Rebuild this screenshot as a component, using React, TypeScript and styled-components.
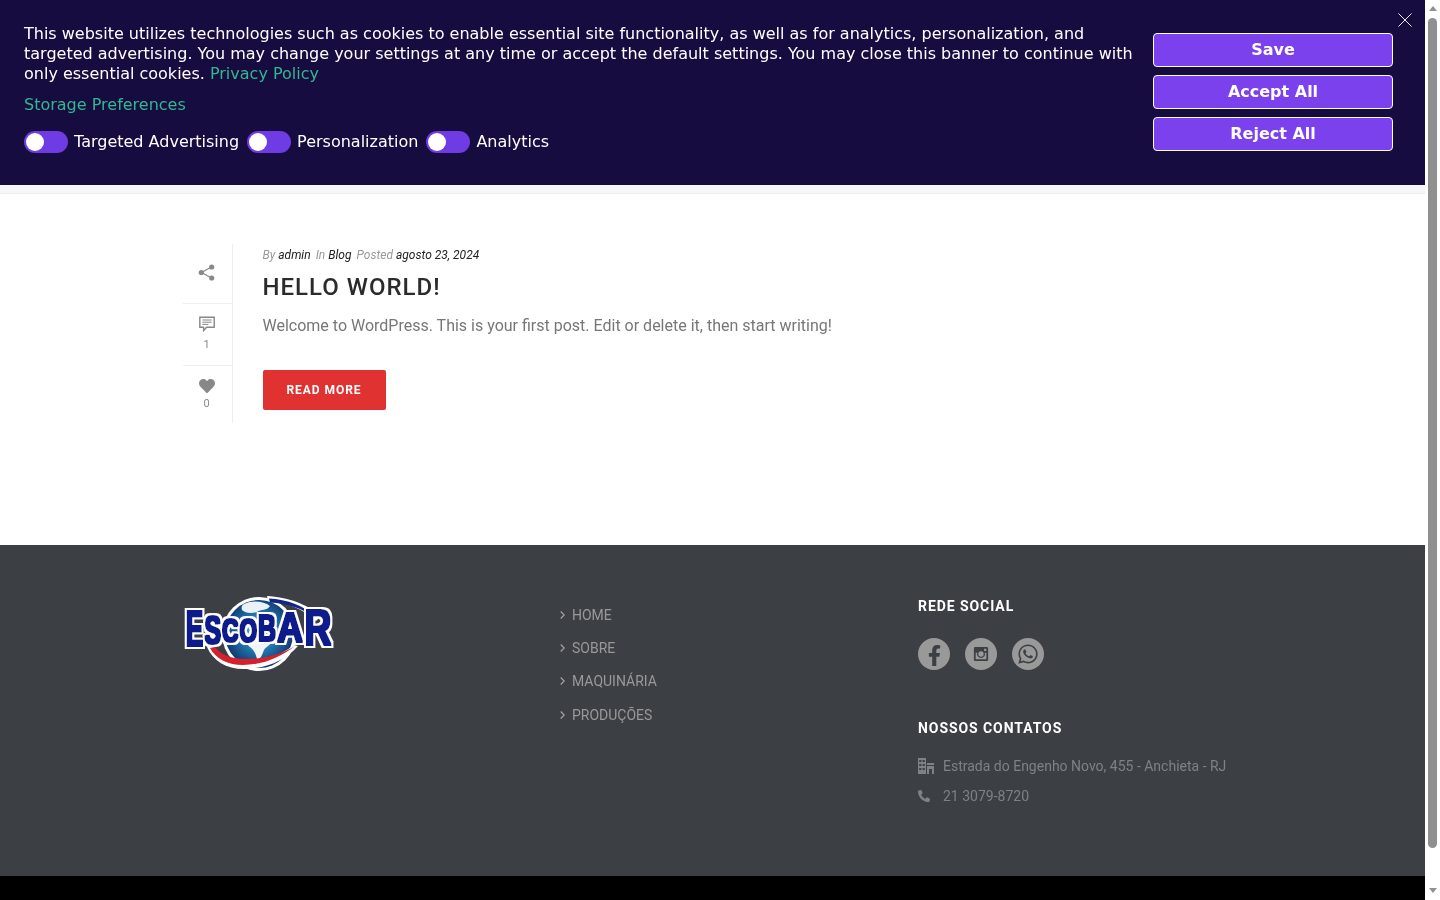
import React from "react";
import styled, { createGlobalStyle } from "styled-components";
import { FaFacebookF, FaHeart, FaPhoneAlt, FaWhatsapp } from "react-icons/fa";

const GlobalStyle = createGlobalStyle`
  html, body { margin: 0; padding: 0; background: #fff; overflow: hidden; }
  body { font-family: Roboto, "Liberation Sans", sans-serif; }
  * { box-sizing: border-box; }
`;

const Shell = styled.div`
  height: 100vh;
  display: flex;
  overflow: hidden;
`;
const Page = styled.div`
  flex: 1;
  min-width: 0;
  position: relative;
  will-change: transform;
`;
const ScrollRail = styled.div`
  width: 15px;
  flex: none;
  height: 100vh;
  background: #fff;
  display: flex;
  flex-direction: column;
  align-items: center;
`;
const ArrowUp = styled.span`
  margin-top: 6px;
  border-left: 4.5px solid transparent;
  border-right: 4.5px solid transparent;
  border-bottom: 5px solid #909090;
`;
const Thumb = styled.span`
  width: 9px;
  height: 830px;
  margin-top: 7px;
  border-radius: 5px;
  background: #8f8f8f;
`;
const ArrowDown = styled.span`
  margin-top: 40px;
  border-left: 4.5px solid transparent;
  border-right: 4.5px solid transparent;
  border-top: 5px solid #909090;
`;
const Banner = styled.section`
  position: absolute;
  top: 0;
  left: 0;
  right: 0;
  height: 185px;
  background: #170c40;
  color: #fff;
  font-family: "DejaVu Sans", sans-serif;
  font-size: 16px;
  line-height: 20px;
  padding: 24px 32px 0 24px;
  display: flex;
  justify-content: space-between;
  z-index: 10;
`;
const BannerText = styled.div`
  width: 1115px;
`;
const Notice = styled.p`
  margin: 0;
`;
const BannerLink = styled.a`
  color: #33b791;
`;
const Prefs = styled.div`
  margin-top: 11px;
  color: #33b791;
`;
const Toggles = styled.div`
  display: flex;
  align-items: center;
  gap: 8px;
  margin-top: 16px;
`;
const Toggle = styled.span`
  width: 44px;
  height: 22px;
  border-radius: 11px;
  background: #6e3be4;
  padding: 2px;
  display: flex;
  &::before {
    content: "";
    width: 18px;
    height: 18px;
    border-radius: 50%;
    background: #fff;
  }
`;
const ToggleItem = styled.label`
  display: flex;
  align-items: center;
  gap: 6px;
`;
const BannerActions = styled.div`
  display: flex;
  flex-direction: column;
  gap: 8px;
  margin-top: 9px;
  width: 240px;
`;
const ActionButton = styled.button`
  height: 34px;
  border: 1px solid #fff;
  border-radius: 4px;
  background: #7a41ec;
  color: #fff;
  font: bold 16px "DejaVu Sans", sans-serif;
  padding: 0 0 2px;
`;
const Close = styled.svg`
  position: absolute;
  top: 13px;
  right: 13px;
  width: 14px;
  height: 14px;
`;

const Header = styled.header`
  height: 194px;
  background: #f6f6f9;
  border-bottom: 1px solid #ececef;
`;
const Main = styled.main`
  height: 351px;
  padding-top: 50px;
`;
const Container = styled.div`
  width: 1059px;
  margin: 0 auto;
`;
const Post = styled.article`
  display: flex;
  gap: 29.5px;
`;
const Rail = styled.aside`
  width: 50px;
  border-right: 1px solid #eeeeee;
  display: flex;
  flex-direction: column;
  color: #888;
`;
const RailItem = styled.div<{ $h: number }>`
  height: ${(p) => p.$h}px;
  display: flex;
  flex-direction: column;
  align-items: center;
  padding-top: ${(p) => (p.$h === 60 ? 20 : 12)}px;
  padding-right: 2px;
  border-bottom: 1px solid #eeeeee;
  font-size: 11px;
  line-height: 14px;
  color: #8a8a8a;
  &:last-child { border-bottom: 0; }
  svg { flex: none; }
`;
const Count = styled.span<{ $gap: number }>`
  margin-top: ${(p) => p.$gap}px;
`;
const PostBody = styled.div`
  flex: 1;
`;
const Meta = styled.div`
  font-size: 12px;
  line-height: 20px;
  font-style: italic;
  color: #999;
  display: flex;
  gap: 5px;
  padding-top: 1px;
  margin-bottom: -1px;
  span { display: inline-flex; gap: 3px; }
  b { font-weight: 400; color: #222; }
`;
const Title = styled.h2`
  margin: 6px 0 0;
  font-size: 24px;
  line-height: 34px;
  font-weight: 500;
  letter-spacing: 1px;
  color: #2b2b2b;
`;
const Excerpt = styled.p`
  margin: 10px 0 0;
  font-size: 16px;
  line-height: 24px;
  color: #777;
`;
const ReadMore = styled.a`
  display: block;
  width: 123px;
  height: 40px;
  margin-top: 32px;
  border-radius: 2px;
  background: #e13232;
  color: #fff;
  font-size: 12px;
  font-weight: 700;
  letter-spacing: 0.95px;
  line-height: 40px;
  text-align: center;
`;

const Footer = styled.footer`
  height: 331px;
  background: #3c3f44;
  padding-top: 50px;
`;
const FooterGrid = styled.div`
  display: grid;
  grid-template-columns: 377px 358px 1fr;
`;
const FooterLinks = styled.ul`
  list-style: none;
  margin: 3px 0 0;
  padding: 0;
`;
const FooterLink = styled.li`
  height: 33.3px;
  display: flex;
  align-items: center;
  gap: 7px;
  font-size: 14px;
  color: #999;
`;
const WidgetColumn = styled.div`
  padding-top: 1px;
`;
const WidgetTitle = styled.h4`
  margin: 0;
  font-size: 14px;
  line-height: 20px;
  font-weight: 700;
  letter-spacing: 0.93px;
  color: #fff;
`;
const Socials = styled.div`
  display: flex;
  gap: 15px;
  margin-top: 22px;
  margin-bottom: 48px;
`;
const Social = styled.span`
  width: 32px;
  height: 32px;
  border-radius: 50%;
  background: #999;
  color: #3c3f44;
  display: flex;
  align-items: center;
  justify-content: center;
  overflow: hidden;
`;
const FacebookGlyph = styled(FaFacebookF)`
  margin-top: 3px;
`;
const Contacts = styled.div`
  margin-top: 13px;
`;
const Contact = styled.div`
  height: 30px;
  display: flex;
  align-items: center;
  gap: 8px;
  font-size: 14px;
  color: #7e8185;
  svg { flex: none; }
`;
const PhoneGlyph = styled(FaPhoneAlt)`
  margin-right: 5px;
`;
const LogoBox = styled.div`
  margin-left: 1px;
`;
const BottomBar = styled.div`
  height: 67px;
  background: #000;
`;

const ShareIcon = () => (
  <svg width="17" height="17" viewBox="0 0 17 17" fill="#888" stroke="#888">
    <path d="M3.500 8.500 13.500 3M3.500 8.500l10 5.500" strokeWidth="1.300" fill="none" />
    <circle cx="3.300" cy="8.500" r="2.600" stroke="none" />
    <circle cx="13.700" cy="3" r="2.600" stroke="none" />
    <circle cx="13.700" cy="14" r="2.600" stroke="none" />
  </svg>
);
const CommentIcon = () => (
  <svg width="16" height="16" viewBox="0 0 16 16" fill="none" stroke="#888" strokeWidth="1.400">
    <path d="M.8 1.200h14.400v10H7.600L4.600 14.600v-3.400H.8z" />
    <path d="M3.400 4h9.200M3.400 6.200h9.200M3.400 8.400h6" strokeWidth="1" />
  </svg>
);
const Chevron = () => (
  <svg width="5" height="8" viewBox="0 0 5 8" fill="none" stroke="#a5a5a5" strokeWidth="1.100">
    <path d="M.7.500 4.200 4 .7 7.500" />
  </svg>
);
const InstaIcon = () => (
  <svg width="16" height="16" viewBox="0 0 18 18">
    <path fillRule="evenodd" fill="#3c3f44" d="M2.500 1h13A1.500 1.500 0 0 1 17 2.500v13a1.500 1.500 0 0 1-1.500 1.500h-13A1.500 1.500 0 0 1 1 15.500v-13A1.500 1.500 0 0 1 2.500 1zM12.500 3v2.500h2.500V3zM3 7.500v7.500h12V7.500h-1.800a4.500 4.500 0 1 1-8.400 0zM9 6a3 3 0 1 0 0 6 3 3 0 0 0 0-6z" />
  </svg>
);
const BuildingIcon = () => (
  <svg width="17" height="16" viewBox="0 0 17 16" fill="#7e8185">
    <path fillRule="evenodd" d="M0 0h8v16H0zM1.200 2v2h2.200V2zm3.400 0v2h2.200V2zM1.200 6v2h2.200V6zm3.400 0v2h2.200V6zM1.200 10v2h2.200v-2zm3.400 0v2h2.200v-2z" />
    <path d="M9 5h7v2H9zM9 8h7v8h-2v-5h-3v5H9z" />
  </svg>
);

const logoLetters = [
  { c: "E", x: 2, w: 17, size: 50, y: 51, adv: 0.667 },
  { c: "S", x: 20.500, w: 16.500, size: 41, y: 49, adv: 0.667 },
  { c: "C", x: 38, w: 16.500, size: 34, y: 47, adv: 0.722 },
  { c: "O", x: 55.500, w: 17.500, size: 34, y: 47, adv: 0.778 },
  { c: "B", x: 74, w: 18, size: 36, y: 46, adv: 0.722 },
  { c: "A", x: 93, w: 26, size: 42, y: 47, adv: 0.722 },
  { c: "R", x: 120.500, w: 27, size: 50, y: 50, adv: 0.722 },
];
const Logo = () => (
  <svg width="152" height="76" viewBox="0 0 152 76">
    <defs>
      <radialGradient id="globe" cx="50%" cy="48%" r="60%">
        <stop offset="0" stopColor="#5fb6dd" />
        <stop offset="0.5" stopColor="#1f6fa8" />
        <stop offset="1" stopColor="#0a2458" />
      </radialGradient>
      <filter id="logoType" filterUnits="userSpaceOnUse" x="0" y="0" width="152" height="76">
        <feMorphology in="SourceAlpha" operator="dilate" radius="1.100" result="fat" />
        <feFlood floodColor="#0b1f8c" result="blue" />
        <feComposite in="blue" in2="fat" operator="in" result="core" />
        <feMorphology in="SourceAlpha" operator="dilate" radius="3" result="wide" />
        <feFlood floodColor="#ffffff" result="white" />
        <feComposite in="white" in2="wide" operator="in" result="edge" />
        <feMerge>
          <feMergeNode in="edge" />
          <feMergeNode in="core" />
        </feMerge>
      </filter>
    </defs>
    <path d="M83 1c20 1 42 8 53 21l-4 4C120 14 102 7 84 6z" fill="#fff" />
    <circle cx="75" cy="39" r="37" fill="#fff" />
    <circle cx="75" cy="39" r="34" fill="url(#globe)" />
    <path d="M85 3.500c18 1 36 7 46 19-12-9-28-14-45-15z" fill="#10238f" />
    <path d="M60 9c8-4 20-3 26 2-3 5-9 3-13 6-6 2-12 1-15-2-1-3 0-5 2-6z" fill="#e8f2f8" />
    <path d="M62 44c8-3 20-2 25 1 2 4-5 6-7 10-2 5-3 9-7 9-1-5-3-9-7-12-3-2-5-5-4-8z" fill="#f0f5f8" />
    <path d="M23 52c6 14 19 22 37 22 22 0 42-9 54-23l-4-1C96 61 78 67 60 67 46 67 36 60 29 50z" fill="#fff" />
    <path d="M26 53c6 11 18 17 33 17 20 0 38-8 52-19C96 60 79 64 62 64 47 64 37 60 31 52z" fill="#d5202e" />
    <g filter="url(#logoType)">
      {logoLetters.map((l) => (
        <text
          key={l.c}
          transform={`translate(${l.x} ${l.y}) scale(${l.w / (l.adv * l.size)} 1)`}
          fontFamily="'Liberation Sans', sans-serif"
          fontWeight="700"
          fontSize={l.size}
          fill="#0b1f8c"
        >
          {l.c}
        </text>
      ))}
    </g>
  </svg>
);

export default function App() {
  return (
    <Shell>
      <GlobalStyle />
      <Page>
        <Banner>
          <BannerText>
            <Notice>
              This website utilizes technologies such as cookies to enable essential site functionality, as well as for analytics, personalization, and targeted advertising. You may change your settings at any time or accept the default settings. You may close this banner to continue with only essential cookies. <BannerLink>Privacy Policy</BannerLink>
            </Notice>
            <Prefs>Storage Preferences</Prefs>
            <Toggles>
              {["Targeted Advertising", "Personalization", "Analytics"].map((t) => (
                <ToggleItem key={t}>
                  <Toggle />
                  {t}
                </ToggleItem>
              ))}
            </Toggles>
          </BannerText>
          <BannerActions>
            <ActionButton>Save</ActionButton>
            <ActionButton>Accept All</ActionButton>
            <ActionButton>Reject All</ActionButton>
          </BannerActions>
          <Close viewBox="0 0 15 15" fill="none" stroke="#fff" strokeWidth="1">
            <path d="M.5.5l14 14M14.500.5l-14 14" />
          </Close>
        </Banner>
        <Header />
        <Main>
          <Container>
            <Post>
              <Rail>
                <RailItem $h={60}>
                  <ShareIcon />
                </RailItem>
                <RailItem $h={62}>
                  <CommentIcon />
                  <Count $gap={6}>1</Count>
                </RailItem>
                <RailItem $h={57}>
                  <FaHeart size={16} color="#888" />
                  <Count $gap={3}>0</Count>
                </RailItem>
              </Rail>
              <PostBody>
                <Meta>
                  <span>By <b>admin</b></span>
                  <span>In <b>Blog</b></span>
                  <span>Posted <b>agosto 23, 2024</b></span>
                </Meta>
                <Title>HELLO WORLD!</Title>
                <Excerpt>Welcome to WordPress. This is your first post. Edit or delete it, then start writing!</Excerpt>
                <ReadMore>READ MORE</ReadMore>
              </PostBody>
            </Post>
          </Container>
        </Main>
        <Footer>
          <Container>
            <FooterGrid>
              <LogoBox><Logo /></LogoBox>
              <FooterLinks>
                {["HOME", "SOBRE", "MAQUINÁRIA", "PRODUÇÕES"].map((t) => (
                  <FooterLink key={t}>
                    <Chevron />
                    {t}
                  </FooterLink>
                ))}
              </FooterLinks>
              <WidgetColumn>
                <WidgetTitle>REDE SOCIAL</WidgetTitle>
                <Socials>
                  <Social><FacebookGlyph size={21} /></Social>
                  <Social><InstaIcon /></Social>
                  <Social><FaWhatsapp size={22} /></Social>
                </Socials>
                <WidgetTitle>NOSSOS CONTATOS</WidgetTitle>
                <Contacts>
                  <Contact><BuildingIcon />Estrada do Engenho Novo, 455 - Anchieta - RJ</Contact>
                  <Contact><PhoneGlyph size={12} color="#7e8185" />21 3079-8720</Contact>
                </Contacts>
              </WidgetColumn>
            </FooterGrid>
          </Container>
        </Footer>
        <BottomBar />
      </Page>
      <ScrollRail>
        <ArrowUp />
        <Thumb />
        <ArrowDown />
      </ScrollRail>
    </Shell>
  );
}
